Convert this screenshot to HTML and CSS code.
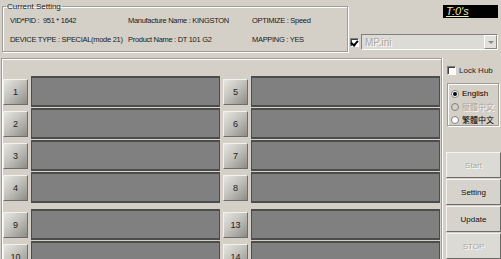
FILE: index.html
```html
<!doctype html>
<html>
	<head>
		<meta charset="utf-8">
		<title>MP Tool</title>
		<link rel="stylesheet" href="styles.css">
	</head>
	<body>
		<div class="screen">
			<div class="top">
				<fieldset class="current">
					<legend>Current Setting</legend>
					<div class="info">
						<span>VID*PID :&nbsp; 951 * 1642</span>
						<span>Manufacture Name : KINGSTON</span>
						<span>OPTIMIZE : Speed</span>
						<span>DEVICE TYPE : SPECIAL(mode 21)</span>
						<span>Product Name : DT 101 G2</span>
						<span>MAPPING : YES</span>
					</div>
				</fieldset>
				<div class="topright">
					<div class="timer">T:0's</div>
					<div class="ini">
						<span class="check on"></span>
						<div class="combo">
							<span class="combo-text">MP.ini</span>
							<span class="drop"></span>
						</div>
					</div>
				</div>
			</div>

			<div class="main">
				<div class="slots">
					<div class="bank">
						<div class="col">
							<div class="slot"><button class="num">1</button><div class="bar"></div></div>
							<div class="slot"><button class="num">2</button><div class="bar"></div></div>
							<div class="slot"><button class="num">3</button><div class="bar"></div></div>
							<div class="slot"><button class="num">4</button><div class="bar"></div></div>
						</div>
						<div class="col">
							<div class="slot"><button class="num">5</button><div class="bar"></div></div>
							<div class="slot"><button class="num">6</button><div class="bar"></div></div>
							<div class="slot"><button class="num">7</button><div class="bar"></div></div>
							<div class="slot"><button class="num">8</button><div class="bar"></div></div>
						</div>
					</div>
					<div class="bank">
						<div class="col">
							<div class="slot"><button class="num">9</button><div class="bar"></div></div>
							<div class="slot"><button class="num">10</button><div class="bar"></div></div>
							<div class="slot"><button class="num">11</button><div class="bar"></div></div>
							<div class="slot"><button class="num">12</button><div class="bar"></div></div>
						</div>
						<div class="col">
							<div class="slot"><button class="num">13</button><div class="bar"></div></div>
							<div class="slot"><button class="num">14</button><div class="bar"></div></div>
							<div class="slot"><button class="num">15</button><div class="bar"></div></div>
							<div class="slot"><button class="num">16</button><div class="bar"></div></div>
						</div>
					</div>
				</div>

				<div class="side">
					<div class="lock"><span class="check"></span>Lock Hub</div>
					<div class="lang">
						<div class="opt"><span class="radio on"></span>English</div>
						<div class="opt off"><span class="radio"></span>簡體中文</div>
						<div class="opt"><span class="radio"></span>繁體中文</div>
					</div>
					<div class="actions">
						<button class="act off">Start</button>
						<button class="act">Setting</button>
						<button class="act">Update</button>
						<button class="act off">STOP</button>
					</div>
				</div>
			</div>
		</div>
	</body>
</html>
```

FILE: styles.css
```css
* {
	box-sizing: border-box;
}
body {
	margin: 0;
	background: #d4d0c8;
	font-family: "Liberation Sans", Arial, sans-serif;
	font-size: 8px;
	color: #000;
	overflow: hidden;
}
.screen {
	width: 501px;
	height: 259px;
	overflow: hidden;
}

/* top strip */
.top {
	display: flex;
	height: 58px;
}
.current {
	margin: 2px 0 0 2px;
	padding: 0 0 0 7px;
	width: 346px;
	height: 50px;
	min-width: 0;
	border: 1px solid #a09c94;
	box-shadow: inset 1px 1px 0 #fff, 1px 1px 0 #fff;
}
.current legend {
	padding: 0 1px;
	margin-left: -4px;
	font-size: 8px;
	line-height: 9px;
	color: #222;
}
.info {
	display: grid;
	grid-template-columns: 118px 124px auto;
	grid-auto-rows: 10px;
	row-gap: 9px;
	padding-top: 5px;
	font-size: 7.5px;
	line-height: 10px;
	letter-spacing: -0.3px;
	color: #1a1a1a;
	white-space: nowrap;
}
.topright {
	flex: 1;
	display: flex;
	flex-direction: column;
}
.timer {
	align-self: flex-end;
	margin: 5px 3px 0 0;
	width: 55px;
	height: 13px;
	background: #000;
	color: #eee9b8;
	font-style: italic;
	font-size: 11px;
	line-height: 13px;
	padding-left: 3px;
	text-decoration: underline;
}
.ini {
	display: flex;
	align-items: center;
	margin: 16px 3px 0 2px;
	gap: 2px;
}
.check {
	display: inline-block;
	width: 9px;
	height: 9px;
	background: #fff;
	border: 1px solid;
	border-color: #808080 #fff #fff #808080;
	box-shadow: inset 1px 1px 0 #404040;
	position: relative;
}
.check.on::after {
	content: "";
	position: absolute;
	left: 1px;
	top: 0;
	width: 3px;
	height: 5px;
	border: solid #000;
	border-width: 0 2px 2px 0;
	transform: rotate(40deg);
}
.combo {
	flex: 1;
	display: flex;
	align-items: center;
	height: 16px;
	background: #dddbd5;
	border: 1px solid;
	border-color: #808080 #fff #fff #808080;
}
.combo-text {
	flex: 1;
	padding-left: 3px;
	font-size: 10px;
	color: #a8a7a2;
	text-shadow: 1px 1px 0 #fff;
}
.drop {
	width: 13px;
	height: 14px;
	background: #e2e0da;
	border: 1px solid;
	border-color: #fff #8a8780 #8a8780 #fff;
	position: relative;
}
.drop::after {
	content: "";
	position: absolute;
	left: 3px;
	top: 5px;
	border: 3px solid transparent;
	border-top-color: #888;
	border-bottom: 0;
}

/* slot panel */
.main {
	display: flex;
	height: 201px;
}
.slots {
	width: 441px;
	margin-left: 1px;
	padding: 17px 0 0 1px;
	border: 1px solid #a09c94;
	border-bottom: 0;
	box-shadow: inset 1px 1px 0 #fff, 1px 0 0 #fff;
	display: flex;
	flex-direction: column;
	gap: 6px;
}
.bank {
	display: flex;
	gap: 3px;
}
.col {
	display: flex;
	flex-direction: column;
	gap: 1px;
}
.slot {
	display: flex;
	align-items: center;
	gap: 3px;
	height: 31px;
}
.num {
	width: 25px;
	height: 26px;
	padding: 0;
	font-family: inherit;
	font-size: 9px;
	color: #222;
	background: linear-gradient(135deg, #e6e5e0 0%, #c4c3be 45%, #9c9b96 85%, #8a8985 100%);
	border: 1px solid;
	border-color: #f2f1ec #6e6d69 #6e6d69 #f2f1ec;
}
.bar {
	width: 189px;
	height: 31px;
	background: #808080;
	border: 1px solid #4c4c4c;
	border-top-width: 2px;
	border-bottom-width: 2px;
}

/* side column */
.side {
	flex: 1;
	padding: 8px 0 0 5px;
	display: flex;
	flex-direction: column;
}
.lock {
	display: flex;
	align-items: center;
	gap: 3px;
	height: 10px;
	color: #222;
}
.lang {
	margin: 7px 2px 0 0;
	height: 44px;
	padding: 5px 0 0 3px;
	border: 1px solid #a09c94;
	box-shadow: inset 1px 1px 0 #fff, 1px 1px 0 #fff;
	display: flex;
	flex-direction: column;
	gap: 3px;
}
.opt {
	display: flex;
	align-items: center;
	gap: 3px;
	height: 10px;
	font-family: "Liberation Sans", "Noto Sans CJK TC", sans-serif;
	font-size: 8px;
}
.opt.off {
	color: #a8a7a2;
	text-shadow: 1px 1px 0 #fff;
}
.radio {
	width: 8px;
	height: 8px;
	border-radius: 50%;
	background: #fff;
	border: 1px solid #808080;
	position: relative;
}
.opt.off .radio {
	background: #d4d0c8;
}
.radio.on::after {
	content: "";
	position: absolute;
	left: 1px;
	top: 1px;
	width: 4px;
	height: 4px;
	border-radius: 50%;
	background: #000;
}
.actions {
	margin: 26px 0 0 -1px;
	display: flex;
	flex-direction: column;
	gap: 1px;
}
.act {
	width: 55px;
	height: 26px;
	padding: 0;
	font-family: inherit;
	font-size: 8px;
	color: #111;
	background: #d6d3cd;
	border: 1px solid;
	border-color: #f4f3ef #6c6a66 #6c6a66 #f4f3ef;
}
.act.off {
	color: #a8a7a2;
	background: #dcdad5;
	text-shadow: 1px 1px 0 #fff;
}
```
